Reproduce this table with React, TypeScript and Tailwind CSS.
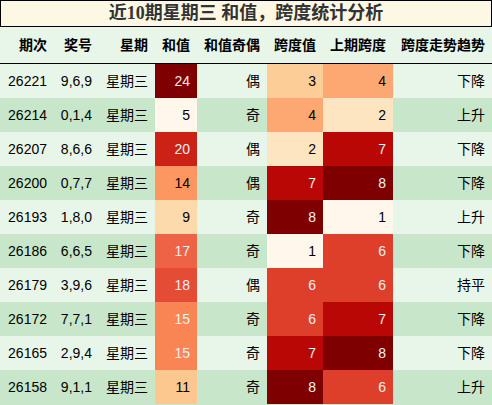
import React from 'react';

const rows = [
  { id: '26221', nums: '9,6,9', sum: 24, parity: '偶', span: 3, prev: 4, trend: '下降' },
  { id: '26214', nums: '0,1,4', sum: 5, parity: '奇', span: 4, prev: 2, trend: '上升' },
  { id: '26207', nums: '8,6,6', sum: 20, parity: '偶', span: 2, prev: 7, trend: '下降' },
  { id: '26200', nums: '0,7,7', sum: 14, parity: '偶', span: 7, prev: 8, trend: '下降' },
  { id: '26193', nums: '1,8,0', sum: 9, parity: '奇', span: 8, prev: 1, trend: '上升' },
  { id: '26186', nums: '6,6,5', sum: 17, parity: '奇', span: 1, prev: 6, trend: '下降' },
  { id: '26179', nums: '3,9,6', sum: 18, parity: '偶', span: 6, prev: 6, trend: '持平' },
  { id: '26172', nums: '7,7,1', sum: 15, parity: '奇', span: 6, prev: 7, trend: '下降' },
  { id: '26165', nums: '2,9,4', sum: 15, parity: '奇', span: 7, prev: 8, trend: '下降' },
  { id: '26158', nums: '9,1,1', sum: 11, parity: '奇', span: 8, prev: 6, trend: '上升' },
];

// OrRd colour stops
const stops = [
  [255, 247, 236],
  [254, 232, 200],
  [253, 212, 158],
  [253, 187, 132],
  [252, 141, 89],
  [239, 101, 72],
  [215, 48, 31],
  [179, 0, 0],
  [127, 0, 0],
];

function orrd(t: number) {
  const x = Math.min(Math.max(t, 0), 1) * (stops.length - 1);
  const i = Math.min(Math.floor(x), stops.length - 2);
  const f = x - i;
  return stops[i].map((c, k) => Math.round(c + (stops[i + 1][k] - c) * f));
}

function lum([r, g, b]: number[]) {
  const lin = (c: number) => {
    const v = c / 255;
    return v <= 0.03928 ? v / 12.92 : Math.pow((v + 0.055) / 1.055, 2.4);
  };
  return 0.2126 * lin(r) + 0.7152 * lin(g) + 0.0722 * lin(b);
}

function heat(v: number, min: number, max: number) {
  const rgb = orrd((v - min) / (max - min));
  return {
    backgroundColor: `rgb(${rgb[0]}, ${rgb[1]}, ${rgb[2]})`,
    color: lum(rgb) < 0.408 ? '#f1f1f1' : '#000000',
  };
}

const headers = ['期次', '奖号', '星期', '和值', '和值奇偶', '跨度值', '上期跨度', '跨度走势趋势'];

const grid = 'grid grid-cols-[54px_45px_56px_42px_70px_56px_70px_99px]';

export default function App() {
  const sums = rows.map((r) => r.sum);
  const spans = rows.map((r) => r.span);
  const prevs = rows.map((r) => r.prev);
  const sMin = Math.min(...sums), sMax = Math.max(...sums);
  const spMin = Math.min(...spans), spMax = Math.max(...spans);
  const pMin = Math.min(...prevs), pMax = Math.max(...prevs);

  return (
    <div className="w-[492px] h-[405px] bg-[#c8e6c9] text-[14px] text-black font-['Liberation_Sans','Noto_Sans_CJK_SC',sans-serif]">
      <div className="h-[27px] border border-black bg-[#fcf8e3] flex items-center justify-center text-[18px] font-bold text-[#333333] font-['Liberation_Serif','Noto_Sans_CJK_SC',serif]">
        近10期星期三 和值，跨度统计分析
      </div>
      <div className={`${grid} h-[37px] bg-[#e8f5e9] border-b border-black font-bold`}>
        {headers.map((h) => (
          <div key={h} className="flex items-center justify-end pr-[7px]">
            {h}
          </div>
        ))}
      </div>
      {rows.map((r, i) => (
        <div key={r.id} className={`${grid} h-[34px] ${i % 2 === 0 ? 'bg-[#e8f5e9]' : 'bg-[#c8e6c9]'}`}>
          <div className="flex items-center justify-end pr-[7px]">{r.id}</div>
          <div className="flex items-center justify-end pr-[7px]">{r.nums}</div>
          <div className="flex items-center justify-end pr-[7px]">星期三</div>
          <div className="flex items-center justify-end pr-[7px]" style={heat(r.sum, sMin, sMax)}>{r.sum}</div>
          <div className="flex items-center justify-end pr-[7px]">{r.parity}</div>
          <div className="flex items-center justify-end pr-[7px]" style={heat(r.span, spMin, spMax)}>{r.span}</div>
          <div className="flex items-center justify-end pr-[7px]" style={heat(r.prev, pMin, pMax)}>{r.prev}</div>
          <div className="flex items-center justify-end pr-[7px]">{r.trend}</div>
        </div>
      ))}
    </div>
  );
}
